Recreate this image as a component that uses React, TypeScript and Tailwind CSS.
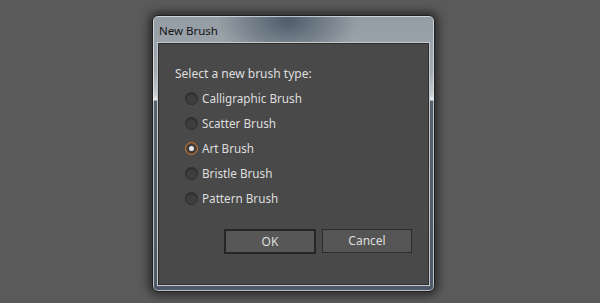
import React from 'react'

const options = ['Calligraphic Brush', 'Scatter Brush', 'Art Brush', 'Bristle Brush', 'Pattern Brush']

function Radio({ checked }: { checked: boolean }) {
  if (checked) {
    return (
      <span className="w-[13px] h-[13px] rounded-full border border-[#d27a30] bg-[#3c3c3c] flex items-center justify-center shadow-[inset_0_0_0_1px_#5a4636]">
        <span className="w-[5px] h-[5px] rounded-full bg-[#e8e8e8]" />
      </span>
    )
  }
  return (
    <span className="w-[13px] h-[13px] rounded-full border border-[#2e2e2e] bg-[#3e3e3e] shadow-[inset_0_1px_1px_rgba(0,0,0,0.35)]" />
  )
}

export default function App() {
  return (
    <div
      className="w-[600px] h-[303px] bg-[#5a5a5a] pl-[152px] pt-[15px] overflow-hidden"
      style={{ fontFamily: '"Noto Sans", "DejaVu Sans", sans-serif' }}
    >
      <div
        className="w-[283px] h-[277px] rounded-[6px] border border-[#1f1f1f] shadow-[0_0_10px_3px_rgba(0,0,0,0.55),inset_0_0_0_1px_rgba(230,235,240,0.7)] flex flex-col px-[4px] pb-[5px]"
        style={{
          background:
            'radial-gradient(ellipse 70px 45px at 48% 4px, rgba(70,85,100,0.9), rgba(70,85,100,0) 100%), linear-gradient(to bottom, #949ca4 0px, #a2a9af 55px, #c6cacd 78px, #eceef0 84px, #56626e 85px, #4e5a67 100%)',
        }}
      >
        <div className="h-[26px] flex items-center pl-[2px] pt-[3px] text-[11.5px] text-[#141414]">New Brush</div>
        <div className="flex-1 border border-[#c4c9ce] bg-[#494949] shadow-[inset_0_0_0_1px_#2e2e2e] text-[#dedede] text-[12px] flex flex-col">
          <div className="pl-[17px] pt-[22px] leading-[18px]">Select a new brush type:</div>
          <div className="flex flex-col pl-[27px] pt-[3px] text-[11.7px]">
            {options.map((o, i) => (
              <div key={o} className="h-[25px] flex items-center gap-[4px]">
                <Radio checked={i === 2} />
                <span>{o}</span>
              </div>
            ))}
          </div>
          <div className="flex pl-[66px] pt-[18px] gap-[6px]">
            <button className="w-[92px] h-[25px] border-2 border-[#262626] bg-[#575757] text-[#dedede]">OK</button>
            <button className="w-[90px] h-[24px] border border-[#2c2c2c] bg-[#555555] text-[#dedede]">Cancel</button>
          </div>
        </div>
      </div>
    </div>
  )
}
